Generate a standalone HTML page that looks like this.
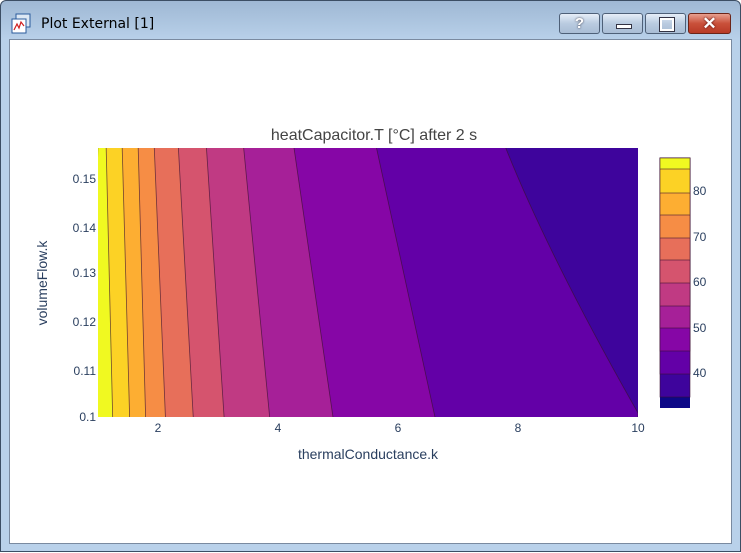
<!DOCTYPE html>
<html><head><meta charset="utf-8"><style>
body{margin:0;width:741px;height:552px;overflow:hidden;font-family:"Liberation Sans",sans-serif;}
.win{position:absolute;left:0;top:0;width:741px;height:552px;background:linear-gradient(#9fb8d4,#b9d1ea 40px,#b9d1ea);border-radius:6px 6px 0 0;box-sizing:border-box;border:1px solid #3c4e64;}
.client{position:absolute;left:8px;top:38px;width:723px;height:505px;background:#fff;border:1px solid #7a8aa0;box-sizing:border-box;}
.title{position:absolute;left:40px;top:15px;color:#000;font-family:"DejaVu Sans",sans-serif;font-size:14px;}
.btn{position:absolute;top:12px;height:21px;border:1px solid #4e6078;border-radius:3px;background:linear-gradient(#e6eef8,#b9cbe0 50%,#a9bdd5);box-sizing:border-box;}
</style></head><body>
<div class="win">
<svg style="position:absolute;left:10px;top:12px" width="22" height="22"><rect x="5" y="1" width="14" height="13" fill="#dde8f4" stroke="#2a5b9c"/><rect x="1" y="6" width="14" height="14" fill="#fff" stroke="#2a5b9c"/><path d="M3 17 L6 11 L8 15 L10 9 L13 13" fill="none" stroke="#d02020" stroke-width="1.2"/></svg>
<div class="title">Plot External [1]</div>
<div class="btn" style="left:558px;width:41px;text-align:center;font-size:15px;font-weight:bold;color:#fff;line-height:19px;text-shadow:0 0 2px #334">?</div>
<div class="btn" style="left:601px;width:41px"><div style="position:absolute;left:13px;top:10px;width:14px;height:3px;background:#fff;border:1px solid #334"></div></div>
<div class="btn" style="left:644px;width:41px"><div style="position:absolute;left:14px;top:4px;width:10px;height:9px;border:2px solid #fff;outline:1px solid #334"></div></div>
<div class="btn" style="left:687px;width:43px;background:linear-gradient(#e8a090,#c9503a 50%,#b83a26);border-color:#6b2418;color:#fff;font-weight:bold;font-size:17px;text-align:center;line-height:19px;text-shadow:0 0 2px #400">✕</div>
<div class="client"></div>
<svg style="position:absolute;left:0;top:0" width="741" height="552" font-family="Liberation Sans, sans-serif">
<defs><clipPath id="c"><rect x="97" y="147" width="540" height="269"/></clipPath></defs>
<g clip-path="url(#c)" stroke="#3a1030" stroke-width="0.8" stroke-opacity="0.7">
<rect x="97" y="147" width="540" height="269" fill="#3e049c" stroke="none"/>
<path d="M97 140 L502 140 Q545 250 637 412 L637 430 L90 430Z" fill="#6300a7"/>
<path d="M97 140 L374 140 L437 430 L90 430Z" fill="#8606a6"/>
<path d="M97 140 L292 140 L334 430 L90 430Z" fill="#a62098"/>
<path d="M97 140 L242 140 L270 430 L90 430Z" fill="#c03a83"/>
<path d="M97 140 L205 140 L224 430 L90 430Z" fill="#d5546e"/>
<path d="M97 140 L177 140 L193 430 L90 430Z" fill="#e76f5a"/>
<path d="M97 140 L153 140 L165 430 L90 430Z" fill="#f68d45"/>
<path d="M97 140 L137 140 L145 430 L90 430Z" fill="#fdae32"/>
<path d="M97 140 L121 140 L129 430 L90 430Z" fill="#fcd225"/>
<path d="M97 140 L105 140 L112 430 L90 430Z" fill="#f0f921"/>
</g>
<g stroke="#3a1030" stroke-width="0.8" stroke-opacity="0.7">
<rect x="659" y="157" width="30" height="250" fill="#0d0887" stroke="none"/>
<rect x="659" y="157" width="30" height="239" fill="#3e049c"/>
<rect x="659" y="157" width="30" height="216" fill="#6300a7"/>
<rect x="659" y="157" width="30" height="193" fill="#8606a6"/>
<rect x="659" y="157" width="30" height="170" fill="#a62098"/>
<rect x="659" y="157" width="30" height="148" fill="#c03a83"/>
<rect x="659" y="157" width="30" height="125" fill="#d5546e"/>
<rect x="659" y="157" width="30" height="102" fill="#e76f5a"/>
<rect x="659" y="157" width="30" height="80" fill="#f68d45"/>
<rect x="659" y="157" width="30" height="57" fill="#fdae32"/>
<rect x="659" y="157" width="30" height="35" fill="#fcd225"/>
<rect x="659" y="157" width="30" height="11" fill="#f0f921"/>
</g>
<g fill="#2a3f5f" font-size="12">
<text x="692" y="194">80</text><text x="692" y="240">70</text><text x="692" y="285">60</text><text x="692" y="331">50</text><text x="692" y="376">40</text>
<g text-anchor="end"><text x="95" y="182">0.15</text><text x="95" y="231">0.14</text><text x="95" y="276">0.13</text><text x="95" y="325">0.12</text><text x="95" y="374">0.11</text><text x="95" y="420">0.1</text></g>
<g text-anchor="middle"><text x="157" y="431">2</text><text x="277" y="431">4</text><text x="397" y="431">6</text><text x="517" y="431">8</text><text x="637" y="431">10</text></g>
<text x="367" y="458" text-anchor="middle" font-size="14">thermalConductance.k</text>
<text transform="translate(46,282) rotate(-90)" text-anchor="middle" font-size="14">volumeFlow.k</text>
<text x="373" y="139" text-anchor="middle" font-size="16" fill="#444">heatCapacitor.T [°C] after 2 s</text>
</g>
</svg>
</div>
</body></html>
